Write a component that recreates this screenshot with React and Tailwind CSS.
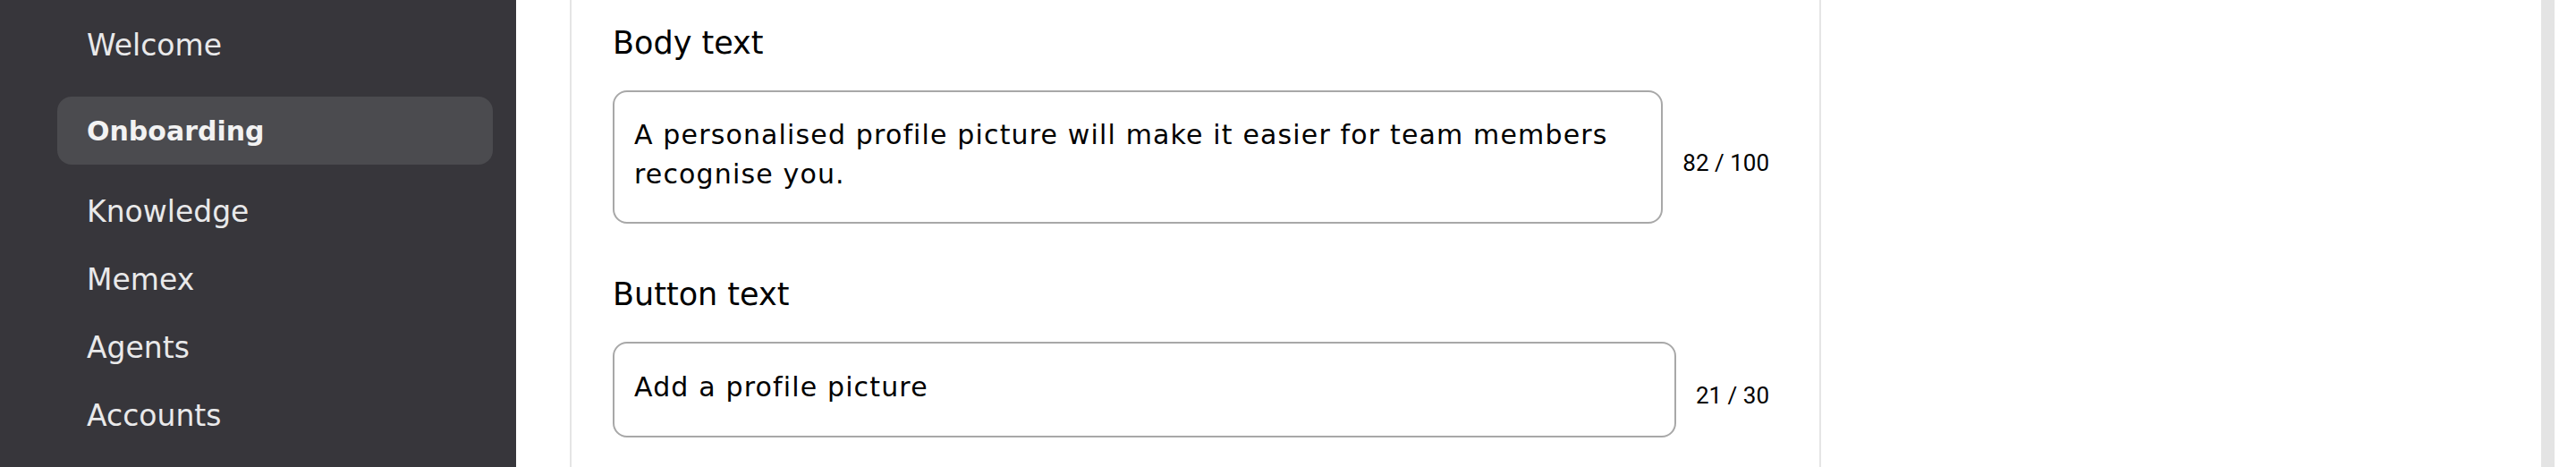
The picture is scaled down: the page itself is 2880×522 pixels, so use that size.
const navItems = ["Welcome", "Onboarding", "Knowledge", "Memex", "Agents", "Accounts"];

function Field({ label, counter, children, first }) {
  return (
    <section className={first ? "" : "mt-[57px]"}>
      <h3 className="h-[44px] text-[35px] leading-[44px] text-black">{label}</h3>
      <div className="mt-[31px] flex items-center gap-[22px]">
        {children}
        <span className="mt-[13px] shrink-0 font-['Roboto',sans-serif] text-[26px] leading-[32px] text-black">
          {counter}
        </span>
      </div>
    </section>
  );
}

export default function App() {
  return (
    <div className="flex h-[522px] w-[2880px] overflow-hidden bg-white font-['DejaVu_Sans',sans-serif]">
      {/* Sidebar */}
      <aside className="w-[577px] shrink-0 bg-[#37363b] pl-[64px] pr-[26px] pt-[13px]">
        <nav className="flex flex-col">
          {navItems.map((item) =>
            item === "Onboarding" ? (
              <div
                key={item}
                className="mt-[19px] mb-[15px] flex h-[76px] items-center rounded-[16px] bg-[#4b4b4f] px-[33px] text-[30px] font-bold text-[#f2f2f2]"
              >
                {item}
              </div>
            ) : (
              <div key={item} className="flex h-[76px] items-center px-[33px] text-[33px] text-[#e9e9ea]">
                {item}
              </div>
            )
          )}
        </nav>
      </aside>

      {/* Editor column */}
      <main className="ml-[60px] w-[1399px] shrink-0 border-x-2 border-[#e5e5e5] pl-[46px] pr-[56px] pt-[26px]">
        <Field label="Body text" counter="82 / 100" first>
          <textarea
            rows={2}
            readOnly
            defaultValue="A personalised profile picture will make it easier for team members recognise you."
            className="h-[149px] min-w-0 flex-1 resize-none overflow-hidden rounded-[16px] border-2 border-[#a8a8a8] px-[22px] pt-[26px] pb-[31px] text-[30px] leading-[44px] tracking-[1.15px] text-black outline-none"
          />
        </Field>
        <Field label="Button text" counter="21 / 30">
          <input
            type="text"
            readOnly
            defaultValue="Add a profile picture"
            className="h-[107px] min-w-0 flex-1 rounded-[16px] border-2 border-[#a8a8a8] px-[22px] pb-[6px] text-[30px] tracking-[1.15px] text-black outline-none"
          />
        </Field>
      </main>

      {/* Preview panel */}
      <div className="flex-1" />
      <div className="w-[15px] shrink-0 bg-[#e4e4e4]" />
      <div className="w-[24px] shrink-0" />
    </div>
  );
}
